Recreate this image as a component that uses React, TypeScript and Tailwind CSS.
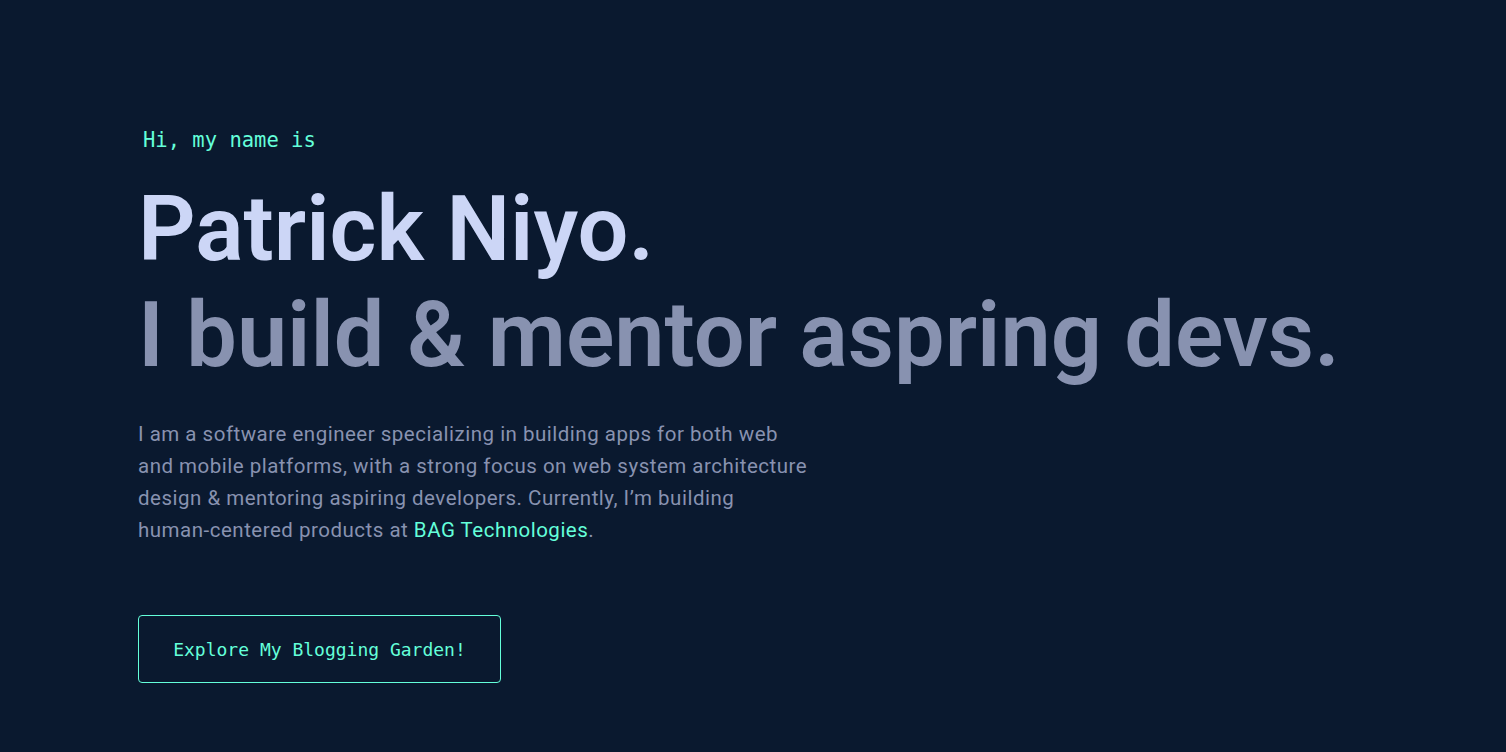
const sans = "font-['Roboto','Liberation_Sans',sans-serif]"
const mono = "font-['DejaVu_Sans_Mono','Liberation_Mono',monospace]"

export default function App() {
  return (
    <div className="min-h-screen w-full bg-[#0a192f] overflow-hidden">
      <section className="pl-[138px] pt-[125px] pb-[68px]">
        {/* intro */}
        <h1 className={`${mono} ml-[5px] mb-[22px] text-[20.5px] leading-[30px] text-[#64ffda]`}>
          Hi, my name is
        </h1>
        <h2 className={`${sans} text-[90px] leading-[106px] font-semibold text-[#ccd6f6] whitespace-nowrap`}>
          Patrick Niyo.
        </h2>
        <h3 className={`${sans} text-[90px] leading-[106px] font-semibold text-[#8892b0] whitespace-nowrap`}>
          I build &amp; mentor aspring devs.
        </h3>

        <p className={`${sans} mt-[29px] max-w-[675px] text-[20.5px] leading-[32px] tracking-[0.5px] text-[#8892b0]`}>
          I am a software engineer specializing in building apps for both web and mobile platforms, with a strong focus on
          web system architecture design &amp; mentoring aspiring developers. Currently, I’m building{' '}
          <span className="whitespace-nowrap">human-centered</span> products at{' '}
          <a href="#" className="text-[#64ffda]">
            BAG Technologies
          </a>
          .
        </p>

        <a
          href="#"
          className={`${mono} mt-[69px] flex h-[68px] w-[363px] items-center justify-center rounded-[4px] border border-[#64ffda] text-[18px] text-[#64ffda]`}
        >
          Explore My Blogging Garden!
        </a>
      </section>
    </div>
  )
}
